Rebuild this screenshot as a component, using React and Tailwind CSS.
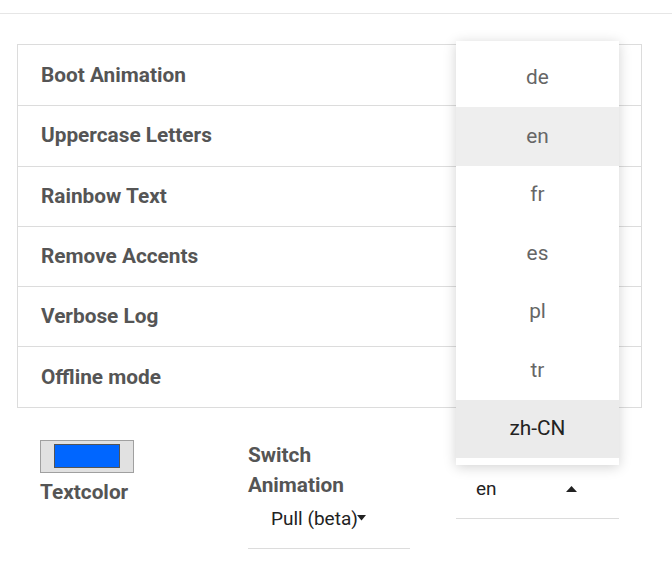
import React from "react";

const rows = [
  "Boot Animation",
  "Uppercase Letters",
  "Rainbow Text",
  "Remove Accents",
  "Verbose Log",
  "Offline mode",
];

const langs = ["de", "en", "fr", "es", "pl", "tr", "zh-CN"];

export default function App() {
  return (
    <div
      className="relative w-[672px] h-[577px] bg-white overflow-hidden"
      style={{ fontFamily: "Roboto, 'Liberation Sans', sans-serif" }}
    >
      <div className="h-[14px] border-b border-[#e6e6e6]" />
      <div className="px-[17px] pt-[30px]">
        <div className="w-[625px] border border-[#dcdcdc]">
          {rows.map((r, i) => (
            <div
              key={r}
              className={`h-[60.3px] flex items-center pl-[23px] text-[20.8px] font-bold text-[#555] ${
                i > 0 ? "border-t border-[#dcdcdc]" : ""
              }`}
            >
              {r}
            </div>
          ))}
        </div>
        <div className="grid grid-cols-[208px_208px_208px] mt-[32px]">
          <div className="pl-[23px] flex flex-col items-start">
            <div className="w-[94px] h-[33px] bg-[#e1e1e1] border border-[#a0a0a0] flex items-center pl-[13px]">
              <div className="w-[66px] h-[24px] bg-[#0066ff] border border-[#555]" />
            </div>
            <div className="mt-[4px] text-[20.8px] leading-[30px] font-bold text-[#555]">
              Textcolor
            </div>
          </div>
          <div className="pl-[23px] pr-[23px]">
            <div className="text-[20.8px] leading-[30px] font-bold text-[#555]">
              Switch
              <br />
              Animation
            </div>
            <div className="h-[49px] border-b border-[#dcdcdc] pl-[23px] flex items-start">
              <span className="text-[19px] leading-[38px] text-[#222]">Pull (beta)</span>
              <svg width="9" height="6" viewBox="0 0 9 6" className="mt-[15px] -ml-[1px]">
                <path d="M0 0 L9 0 L4.5 5.5 Z" fill="#222" />
              </svg>
            </div>
          </div>
          <div className="pl-[23px] pr-[22px]">
            <div className="h-[30px]" />
            <div className="h-[49px] border-b border-[#dcdcdc] pl-[20px] pr-[42px] flex items-start justify-between">
              <span className="text-[19px] leading-[38px] text-[#222]">en</span>
              <svg width="11" height="6" viewBox="0 0 11 6" className="mt-[16px]">
                <path d="M0 6 L11 6 L5.5 0 Z" fill="#222" />
              </svg>
            </div>
          </div>
        </div>
      </div>

      <div className="absolute left-[456px] top-[41px] w-[163px] bg-white pt-[7.5px] pb-[6.5px] shadow-[0_2px_12px_rgba(0,0,0,0.18)]">
        {langs.map((l) => (
          <div
            key={l}
            className={`h-[58.5px] flex items-center justify-center text-[20.8px] ${
              l === "en" ? "bg-[#eeeeee] text-[#666]" : l === "zh-CN" ? "bg-[#ebebeb] text-[#222]" : "text-[#666]"
            }`}
          >
            {l}
          </div>
        ))}
      </div>
    </div>
  );
}
